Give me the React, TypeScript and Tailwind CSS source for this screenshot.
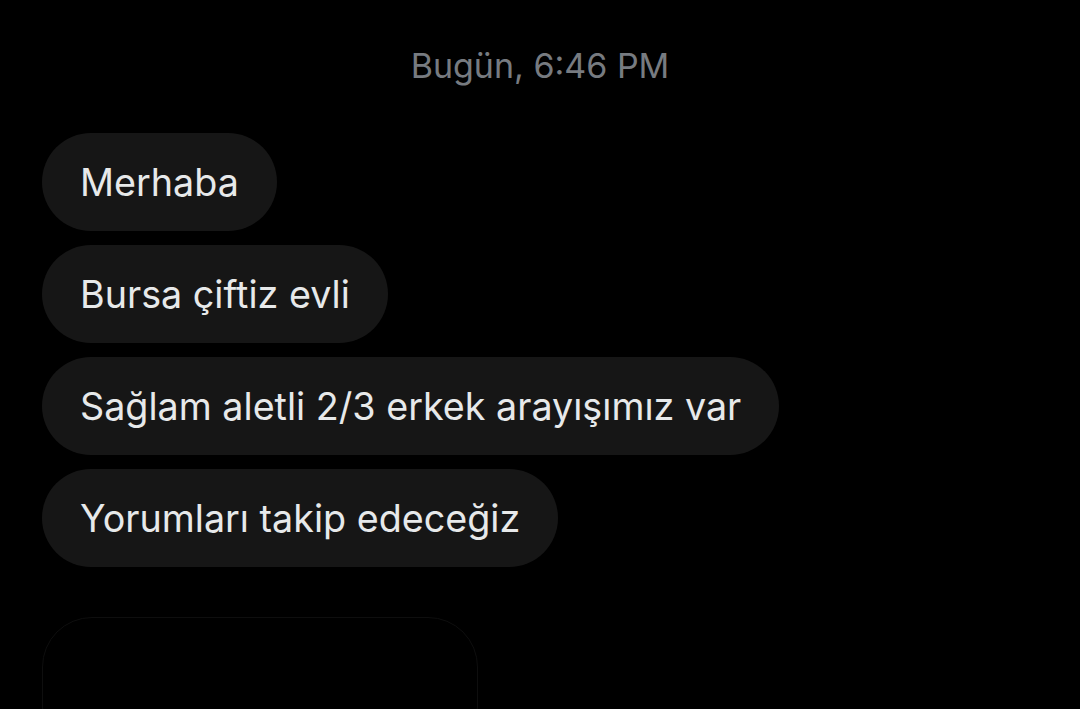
export default function App() {
  const msgs = [
    "Merhaba",
    "Bursa çiftiz evli",
    "Sağlam aletli 2/3 erkek arayışımız var",
    "Yorumları takip edeceğiz",
  ];
  return (
    <div
      className="w-[1080px] h-[709px] bg-black overflow-hidden flex flex-col"
      style={{ fontFamily: "Inter, 'Noto Sans', sans-serif" }}
    >
      <div className="shrink-0 pt-[44px] h-[133px] text-center text-[34px] leading-[44px] text-[#777b80]">
        Bugün, 6:46 PM
      </div>
      <div className="shrink-0 flex flex-col items-start gap-[14px] pl-[42px]">
        {msgs.map((m) => (
          <div
            key={m}
            className="shrink-0 h-[98px] flex items-center rounded-full bg-[#161616] pl-[38px] pr-[38px] text-[37.7px] text-[#e7e9ea]"
          >
            {m}
          </div>
        ))}
      </div>
      <div className="shrink-0 ml-[42px] mt-[50px] w-[436px] h-[140px] rounded-[50px] border-[1.5px] border-[#0e0e0e] bg-black" />
    </div>
  );
}
